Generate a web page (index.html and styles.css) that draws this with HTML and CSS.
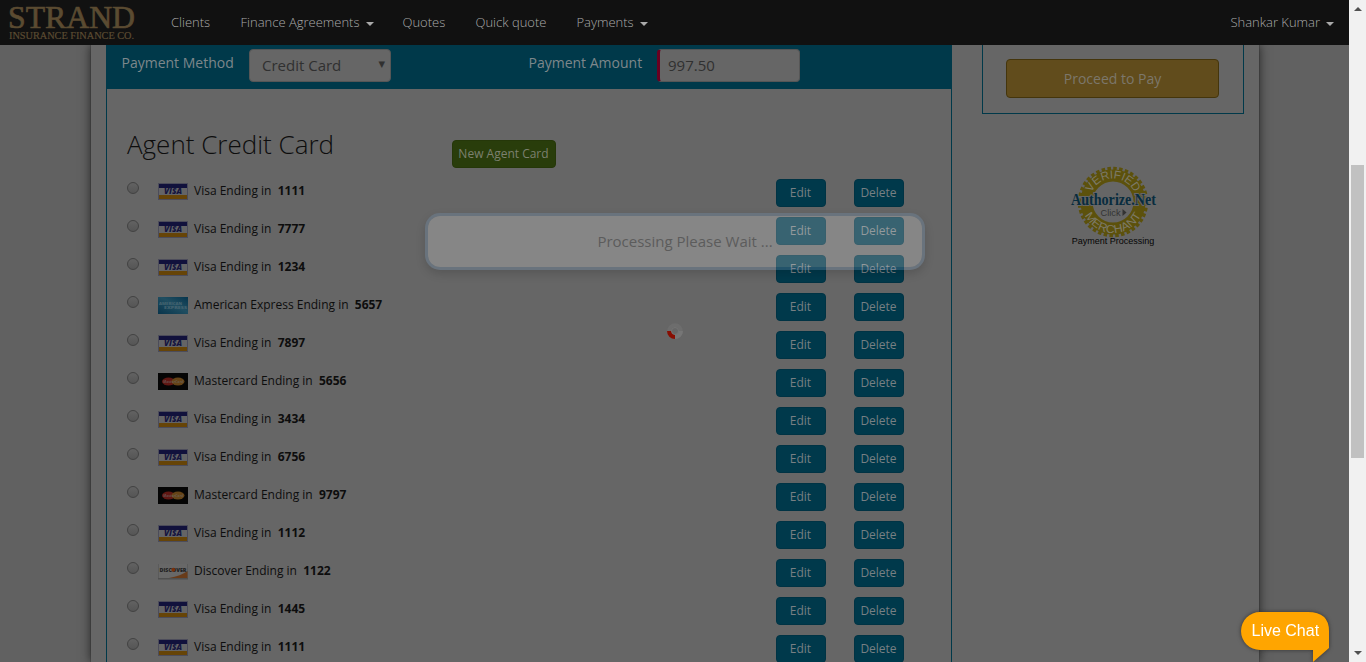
FILE: index.html
```
<!DOCTYPE html>
<html lang="en">
<head>
<meta charset="utf-8">
<title>Strand Insurance Finance Co.</title>
<link rel="stylesheet" href="styles.css">
</head>
<body>
<div class="window">
  <div class="page">
    <header class="navbar">
      <svg class="logo" width="130" height="45" viewBox="0 0 130 45">
        <g font-family="Liberation Serif" fill="#5b4b31" stroke="#5b4b31">
          <text x="0" y="27.5" font-size="32.500" textLength="127" lengthAdjust="spacingAndGlyphs" stroke-width=".7">STRAND</text>
          <text x="1" y="38.5" font-size="10" textLength="125" lengthAdjust="spacingAndGlyphs" stroke-width=".2">INSURANCE FINANCE CO.</text>
        </g>
      </svg>
      <nav class="links">
        <a class="n1">Clients</a><a class="n2">Finance Agreements<i class="caret"></i></a><a class="n3">Quotes</a><a class="n4">Quick quote</a><a class="n5">Payments<i class="caret"></i></a>
      </nav>
      <a class="user">Shankar Kumar<i class="caret"></i></a>
    </header>
    <div class="container">
      <main class="panel">
        <div class="payment">
          <label class="method">Payment Method</label><div class="field select">Credit Card<span class="arrow">▼</span></div>
          <label class="amount">Payment Amount</label><div class="field required">997.50</div>
        </div>
        <div class="heading"><h1>Agent Credit Card</h1><button class="btn new">New Agent Card</button></div>
        <div class="cards" id="cards"></div>
      </main>
      <aside class="side">
        <div class="pay"><button class="proceed">Proceed to Pay</button></div>
        <div class="merchant">
          <svg width="90" height="72" viewBox="0 0 90 72">
            <circle cx="45" cy="36" r="33" fill="none" stroke="#5c510c" stroke-width="4.500" stroke-dasharray="3.45 2.31"/>
            <circle cx="45" cy="36" r="26.500" fill="none" stroke="#5c510c" stroke-width="12"/>
            <path id="top" d="M21.500 36A23.500 23.500 0 0 1 68.500 36" fill="none"/><path id="bottom" d="M14 36A31 31 0 0 0 76 36" fill="none"/>
            <g font-family="Liberation Sans" font-size="11.500" fill="#7c7a68"><text><textPath href="#top" startOffset="50%" text-anchor="middle" textLength="54" lengthAdjust="spacingAndGlyphs">VERIFIED</textPath></text><text><textPath href="#bottom" startOffset="50%" text-anchor="middle" textLength="70" lengthAdjust="spacingAndGlyphs">MERCHANT</textPath></text></g>
            <text x="3" y="39" font-family="Liberation Serif" font-size="16.500" font-weight="700" textLength="85" lengthAdjust="spacingAndGlyphs" fill="#082c3e" stroke="#666" stroke-width="2" paint-order="stroke">Authorize.Net</text>
            <text x="32.500" y="50" font-family="Liberation Sans" font-size="9.500" textLength="20" lengthAdjust="spacingAndGlyphs" fill="#333">Click</text><path d="M54.500 43l4 3.500-4 3.500z" fill="#333"/>
          </svg>
          <div class="caption">Payment Processing</div>
        </div>
      </aside>
    </div>
  </div>
  <div class="scrollbar"><i class="up"></i><div class="thumb"></div><i class="down"></i></div>
</div>
<div class="processing">Processing Please Wait ...</div>
<svg class="spinner" width="16" height="16" viewBox="0 0 16 16"><circle cx="8" cy="8" r="5.800" fill="none" stroke="#6d6d6d" stroke-width="4"/><path d="M8 8h8a8 8 0 0 1-8 8z" fill="#767676"/><path d="M0 8a8 8 0 0 0 8 8V8z" fill="#870e02"/><circle cx="8" cy="8" r="3.500" fill="#666" stroke="#757575"/></svg>
<div class="chat"><svg width="94" height="54" viewBox="0 0 94 54"><path d="M22 3H70Q91 3 91 22V39L75 53V41H22A19 19 0 0 1 22 3z" fill="#ffa500"/></svg><span>Live Chat</span></div>
<script src="cards.js"></script>
</body>
</html>
```
FILE: styles.css
```
* { box-sizing: border-box; }
body { margin: 0; height: 662px; overflow: hidden; font-family: "Open Sans", sans-serif; font-size: 12px; color: #0d0d0d; background: #616161; }
.window { display: flex; height: 662px; }
.page { width: 1349px; height: 662px; overflow: hidden; background: #616161; }
.navbar { position: relative; z-index: 1; display: flex; align-items: center; height: 45px; background: #111; color: #aaa; font-size: 13px; font-weight: 300; }
.logo { margin-left: 8px; flex: none; }
.links { display: flex; margin-left: 33px; padding-bottom: 2px; }
.links a { white-space: nowrap; }
.n1 { width: 69.5px; } .n2 { width: 162px; } .n3 { width: 73px; } .n4 { width: 101px; }
.user { margin-left: auto; margin-right: 15px; padding-bottom: 2px; }
.caret { display: inline-block; margin-left: 6px; vertical-align: 1px; border: 4px solid transparent; border-top-color: #aaa; border-bottom: 0; }
.container { display: flex; width: 1168px; height: 617px; margin-left: 91px; padding-left: 15px; background: #666; box-shadow: 0 0 10px #222, 0 0 1px #222; }
.panel { width: 846px; border: 1px solid #00394a; border-width: 0 1px; }
.payment { display: flex; height: 44px; padding: 4px 0 0 14.5px; background: #00394a; color: #7d878b; font-size: 14px; }
.payment label { line-height: 28px; white-space: nowrap; }
.method { width: 127.5px; } .amount { width: 128.5px; margin-left: 137.5px; }
.field { height: 33px; width: 142px; padding-left: 12px; line-height: 31px; font-size: 15px; color: #303030; background: #666; border: 1px solid #565656; border-radius: 4px; }
.select { display: flex; justify-content: space-between; }
.arrow { font: 8.5px/29px "DejaVu Sans", sans-serif; margin-right: 5px; }
.required { border-left: 3px solid #690020; padding-left: 8px; width: 143px; }
.heading { display: flex; height: 85px; padding: 33px 0 0 20px; }
h1 { width: 325px; margin: 0; font-size: 26px; line-height: 44px; font-weight: 300; }
.btn { width: 50px; height: 28px; padding: 0 1px 2px 0; border: 1px solid #003344; border-radius: 4px; background: #00394b; color: #777f83; font: 12px "Open Sans", sans-serif; }
.new { width: 104px; margin-top: 18px; background: #293d0b; border-color: #253709; color: #7c806f; }
.row { display: grid; grid-template-columns: 31px 36px 582px 78px 50px; padding: 5px 0 0 20px; height: 38px; }
.radio { width: 12px; height: 12px; margin-top: 3px; border: 1px solid #424242; border-radius: 50%; background: linear-gradient(#626262, #555); }
.brand { width: 30px; height: 17px; margin-top: 4px; }
.name { line-height: 23px; white-space: pre; }
.name b { font-weight: 700; }
.side { margin-left: 30px; width: 262px; }
.pay { height: 69px; border: 1px solid #00394a; border-top: 0; padding: 14px 23px; }
.proceed { width: 213px; height: 39px; border: 1px solid #44350c; border-radius: 4px; background: #614c1c; color: #7c776b; font: 14px "Open Sans", sans-serif; }
.merchant { margin-top: 52px; display: flex; flex-direction: column; align-items: center; }
.caption { font: 9px/11px "Liberation Sans", sans-serif; color: #050505; margin-top: -2px; white-space: nowrap; }
.scrollbar { display: flex; flex-direction: column; align-items: center; width: 17px; background: #f1f1f1; }
.up { margin-top: 7px; border: 4px solid transparent; border-top: 0; border-bottom-color: #505050; }
.down { margin: auto 0 7px; border: 4px solid transparent; border-bottom: 0; border-top-color: #505050; }
.thumb { width: 13px; height: 293px; margin-top: 154px; background: #c1c1c1; }
.processing { position: absolute; z-index: 3; left: 425px; top: 213px; width: 500px; height: 57px; padding-left: 20px; border: 3px solid rgba(111, 145, 180, .3); border-radius: 15px; background: rgba(238, 238, 238, .235); background-clip: padding-box; box-shadow: 0 4px 10px rgba(0, 0, 0, .15); text-align: center; line-height: 51px; font-size: 15px; color: #5c5c5c; }
.spinner { position: absolute; left: 667px; top: 323px; }
.chat { position: absolute; left: 1238px; top: 609px; width: 94px; height: 54px; color: #fff; font: 16px "Liberation Sans", sans-serif; filter: drop-shadow(0 0 2px #333); }
.chat span { position: absolute; left: 13.5px; top: 13px; white-space: nowrap; }
```
FILE: cards.js
```
const lettering = (x, y, length, size, fill, text, style = '') =>
  `<text x="${x}" y="${y}" textLength="${length}" lengthAdjust="spacingAndGlyphs" font-family="Open Sans" font-size="${size}" font-weight="800" fill="${fill}" ${style}>${text}</text>`;
const italic = 'font-style="italic"';
const logos = {
  Visa: `<rect width="30" height="17" fill="#4c4c5a"/><rect x="1" y="1" width="28" height="15" fill="#646466"/>
    <rect x="1" y="1" width="28" height="4" fill="#11113c"/><rect x="1" y="12" width="28" height="4" fill="#664407"/>` + lettering(6, 11.3, 18, 8.5, '#14143f', 'VISA', italic),
  Mastercard: `<rect width="30" height="17" fill="#050505"/>
    <ellipse cx="10.5" cy="8.5" rx="6.5" ry="4" fill="#601713"/><ellipse cx="20" cy="8.5" rx="6.5" ry="4" fill="#664417"/>` + lettering(5, 9.8, 20, 3.5, '#686464', 'MasterCard', italic + ' opacity=".6"'),
  'American Express': `<defs><linearGradient id="blue" x1="0" y1="1" x2="1" y2="0"><stop offset="0" stop-color="#08344b"/><stop offset=".55" stop-color="#204e61"/><stop offset="1" stop-color="#06354d"/></linearGradient></defs>
    <rect width="30" height="17" fill="url(#blue)"/>` + lettering(1, 8, 23, 4, '#436370', 'AMERICAN') + lettering(6, 11.5, 23, 4, '#436370', 'EXPRESS'),
  Discover: `<rect y="1" width="30" height="15.5" fill="#4f4f4f"/><rect x=".5" y="1" width="29" height="14" fill="#686868"/>
    <path d="M11 15Q23 13 29.5 8v7z" fill="#683b19"/>` + lettering(1.5, 8.5, 27, 5, '#222', 'DISCOVER') + '<circle cx="15.3" cy="6.7" r="2" fill="#77300b"/>'
};
const cards = [['Visa', '1111'], ['Visa', '7777'], ['Visa', '1234'], ['American Express', '5657'], ['Visa', '7897'], ['Mastercard', '5656'], ['Visa', '3434'], ['Visa', '6756'], ['Mastercard', '9797'], ['Visa', '1112'], ['Discover', '1122'], ['Visa', '1445'], ['Visa', '1111']];
document.getElementById('cards').innerHTML = cards.map(([brand, digits]) =>
  `<div class="row"><span class="radio"></span><svg class="brand" viewBox="0 0 30 17">${logos[brand]}</svg><span class="name">${brand} Ending in  <b>${digits}</b></span><button class="btn">Edit</button><button class="btn">Delete</button></div>`
).join('');
```
